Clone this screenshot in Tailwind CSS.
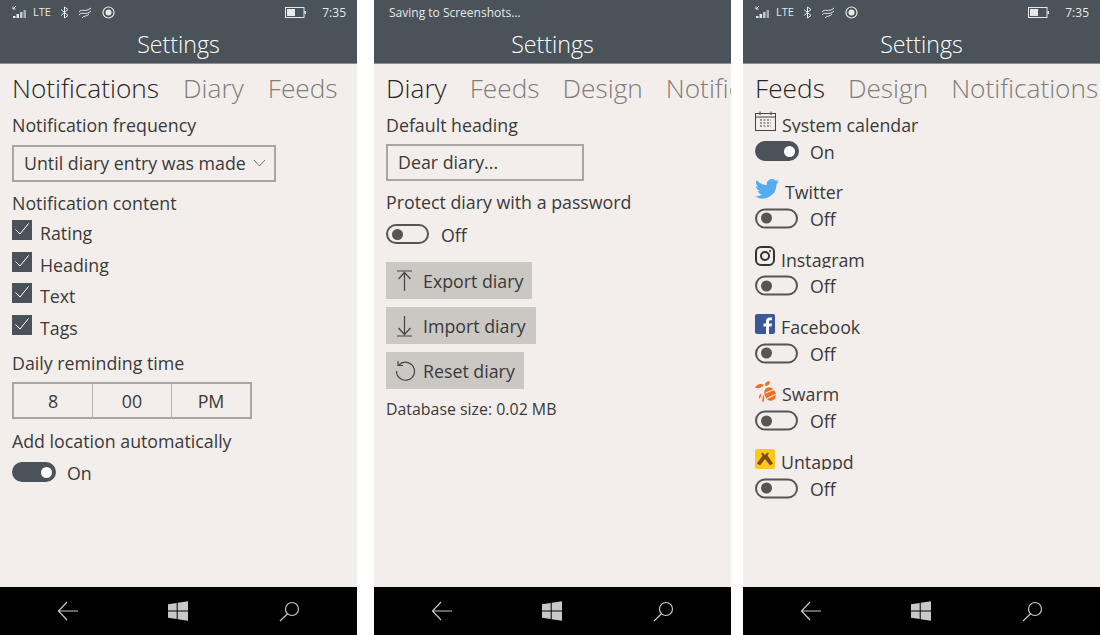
<!DOCTYPE html>
<html lang="en">
<head>
    <meta charset="UTF-8">
    <title>Settings</title>
    <script src="https://cdn.jsdelivr.net/npm/@tailwindcss/browser@4"></script>
</head>
<body class="bg-white font-['Open_Sans',sans-serif] text-[#3a3a3a] overflow-hidden">
<div class="flex w-[1100px] h-[635px]">

    <!-- Notifications -->
    <section class="w-[357px] h-[635px] flex flex-col bg-[#f3eeeb] shrink-0">
        <header class="h-16 bg-[#4a5359] text-white shrink-0 border-b border-[#8a8f92]">
            <div class="h-[25px] flex items-center pl-3 pr-[11px] text-[#e8e8e8]">
                <svg class="w-[16px] h-[16px] mr-[5px]" viewBox="0 0 16 16" fill="#e8e8e8"><path d="M1 4 4 1M1 1.500V4h2.500" stroke="#e8e8e8" fill="none"/><rect x="1" y="11" width="2.500" height="2"/><rect x="4.500" y="9" width="2.500" height="4"/><rect x="8" y="7" width="2.500" height="6" opacity=".8"/><rect x="11.500" y="5" width="2.500" height="8" opacity=".6"/></svg>
                <span class="text-[11px] mr-[9px]">LTE</span>
                <svg class="w-[9px] h-[13px] mr-[9px]" viewBox="0 0 9 13" fill="none" stroke="#e8e8e8"><path d="M1 3.500 8 9.500 4.500 12V1L8 3.500 1 9.500"/></svg>
                <svg class="w-[14px] h-[12px] mr-[10px]" viewBox="0 0 14 12" fill="none" stroke="#e8e8e8"><path d="M1 5C4 1 7 6 13 1M1 8C4 4 8 9 13 4M4 11C6 8 9 10 11 7"/></svg>
                <svg class="w-[13px] h-[13px]" viewBox="0 0 13 13" fill="none"><circle cx="6.500" cy="6.500" r="5.500" stroke="#e8e8e8" stroke-width="1.200"/><circle cx="6.500" cy="6.500" r="3" fill="#e8e8e8"/></svg>
                <svg class="w-[21px] h-[11px] ml-auto mr-[16px]" viewBox="0 0 21 11" fill="none"><rect x=".5" y=".5" width="18.500" height="10" stroke="#e8e8e8"/><rect x="2" y="2" width="8" height="7" fill="#e8e8e8"/><rect x="19.500" y="4" width="1.500" height="3" fill="#e8e8e8"/></svg>
                <span class="text-[12px]">7:35</span>
            </div>
            <h1 class="text-center text-[23.200px] leading-[39px] font-light">Settings</h1>
        </header>
        <div class="flex-1 min-w-0 overflow-hidden">
            <nav class="flex whitespace-nowrap h-[44px] items-center mt-[3px] pl-3 gap-[24px] text-[26.250px] font-light text-[#7f7c79]">
                <span class="text-[#262626]">Notifications</span><span>Diary</span><span>Feeds</span>
            </nav>
            <div class="px-3 text-[17.800px] leading-[26px]">
                <p class="mt-[1px]">Notification frequency</p>
                <div class="mt-[7px] w-[264px] h-[37px] border-2 border-[#a9a5a1] flex items-center justify-between pl-[10px] pr-[8px] pb-[2px]">
                    <span>Until diary entry was made</span>
                    <svg class="w-[13px] h-[8px]" viewBox="0 0 13 8" fill="none" stroke="#77736f"><path d="M1 1l5.500 6L12 1"/></svg>
                </div>
                <p class="mt-[8px]">Notification content</p>
                <div class="mt-[4px] flex flex-col gap-[11.700px]">
                    <label class="flex items-center h-5 gap-2"><span class="size-5 bg-[#4a5359] flex items-center justify-center"><svg class="size-4 -translate-y-px" viewBox="0 0 16 16" fill="none" stroke="#fff"><path d="M1.500 8.500 6 13 14.500 2.500"/></svg></span><span class="translate-y-[3px]">Rating</span></label>
                    <label class="flex items-center h-5 gap-2"><span class="size-5 bg-[#4a5359] flex items-center justify-center"><svg class="size-4 -translate-y-px" viewBox="0 0 16 16" fill="none" stroke="#fff"><path d="M1.500 8.500 6 13 14.500 2.500"/></svg></span><span class="translate-y-[3px]">Heading</span></label>
                    <label class="flex items-center h-5 gap-2"><span class="size-5 bg-[#4a5359] flex items-center justify-center"><svg class="size-4 -translate-y-px" viewBox="0 0 16 16" fill="none" stroke="#fff"><path d="M1.500 8.500 6 13 14.500 2.500"/></svg></span><span class="translate-y-[3px]">Text</span></label>
                    <label class="flex items-center h-5 gap-2"><span class="size-5 bg-[#4a5359] flex items-center justify-center"><svg class="size-4 -translate-y-px" viewBox="0 0 16 16" fill="none" stroke="#fff"><path d="M1.500 8.500 6 13 14.500 2.500"/></svg></span><span class="translate-y-[3px]">Tags</span></label>
                </div>
                <p class="mt-[15px]">Daily reminding time</p>
                <div class="mt-[6px] w-[240px] h-[37px] border-2 border-[#a9a5a1] grid grid-cols-[78px_80px_1fr] text-center leading-[35px]">
                    <span>8</span><span class="border-x border-[#b5b1ad]">00</span><span>PM</span>
                </div>
                <p class="mt-[9px]">Add location automatically</p>
                <div class="mt-[8px] flex items-center gap-[11px] h-5">
                    <span class="w-[44px] h-5 rounded-full bg-[#4a5359] flex items-center justify-end pr-[4px]"><span class="size-[11px] rounded-full bg-white"></span></span><span class="translate-y-px">On</span>
                </div>
            </div>
        </div>
        <footer class="h-12 bg-black shrink-0 flex items-center pl-[57px]">
            <svg class="w-[22px] h-[20px]" viewBox="0 0 22 20" fill="none" stroke="#c8c8c8" stroke-width="1.200"><path d="M21 10H2M10 1 1.500 10l8.500 9"/></svg>
            <svg class="w-[20px] h-[20px] ml-[89px]" viewBox="0 0 20 20" fill="#c8c8c8"><path d="M0 3.200 8.700 2V9.500H0ZM9.700 1.800 20 .3V9.500H9.700ZM0 10.500H8.700V18L0 16.800ZM9.700 10.500H20V19.700L9.700 18.200Z"/></svg>
            <svg class="w-[21px] h-[21px] ml-[91px]" viewBox="0 0 21 21" fill="none" stroke="#c8c8c8" stroke-width="1.200"><circle cx="13" cy="8" r="6.500"/><path d="M8.500 12.800 1 20"/></svg>
        </footer>
    </section>

    <!-- Diary -->
    <section class="w-[357px] h-[635px] flex flex-col bg-[#f3eeeb] shrink-0 ml-[17px]">
        <header class="h-16 bg-[#4a5359] text-white shrink-0 border-b border-[#8a8f92]">
            <div class="h-[25px] flex items-center pl-[15px] text-[12px] text-[#e8e8e8] leading-[22px]">Saving to Screenshots...</div>
            <h1 class="text-center text-[23.200px] leading-[39px] font-light">Settings</h1>
        </header>
        <div class="flex-1 min-w-0 overflow-hidden">
            <nav class="flex whitespace-nowrap h-[44px] items-center mt-[3px] pl-3 gap-[23px] text-[26.250px] font-light text-[#7f7c79]">
                <span class="text-[#262626]">Diary</span><span>Feeds</span><span>Design</span><span>Notifications</span>
            </nav>
            <div class="px-3 text-[17.800px] leading-[26px]">
                <p class="mt-[1px]">Default heading</p>
                <div class="mt-[6px] w-[198px] h-[37px] border-2 border-[#a9a5a1] flex items-center pl-[10px] pb-[1px]">Dear diary...</div>
                <p class="mt-[8px]">Protect diary with a password</p>
                <div class="mt-[9px] flex items-center gap-[12px] h-5">
                    <span class="w-[43px] h-5 rounded-full border-2 border-[#555] flex items-center pl-[4px]"><span class="size-[11px] rounded-full bg-[#555]"></span></span><span class="translate-y-px">Off</span>
                </div>
                <div class="mt-[18px] flex flex-col items-start gap-[8px]">
                    <button class="w-[146px] h-[37px] bg-[#cbc7c3] flex items-center pl-[10px] gap-[10px]"><svg class="w-[17px] h-[24px]" viewBox="0 0 17 24" fill="none" stroke="#444" stroke-width="1.200"><path d="M1 2H16M8.500 22V4M2.500 10l6-6.500 6 6.500"/></svg>Export diary</button>
                    <button class="w-[150px] h-[37px] bg-[#cbc7c3] flex items-center pl-[10px] gap-[10px]"><svg class="w-[17px] h-[24px]" viewBox="0 0 17 24" fill="none" stroke="#444" stroke-width="1.200"><path d="M1 22H16M8.500 2V20M2.500 14l6 6.500 6-6.500"/></svg>Import diary</button>
                    <button class="w-[138px] h-[37px] bg-[#cbc7c3] flex items-center pl-[9px] gap-[7px]"><svg class="w-[21px] h-[21px]" viewBox="0 0 21 21" fill="none" stroke="#444" stroke-width="1.200"><path d="M4 5A9 9 0 1 1 1.500 11M3 1V5.500H8"/></svg>Reset diary</button>
                </div>
                <p class="mt-[7px] text-[15.900px]">Database size: 0.02 MB</p>
            </div>
        </div>
        <footer class="h-12 bg-black shrink-0 flex items-center pl-[57px]">
            <svg class="w-[22px] h-[20px]" viewBox="0 0 22 20" fill="none" stroke="#c8c8c8" stroke-width="1.200"><path d="M21 10H2M10 1 1.500 10l8.500 9"/></svg>
            <svg class="w-[20px] h-[20px] ml-[89px]" viewBox="0 0 20 20" fill="#c8c8c8"><path d="M0 3.200 8.700 2V9.500H0ZM9.700 1.800 20 .3V9.500H9.700ZM0 10.500H8.700V18L0 16.800ZM9.700 10.500H20V19.700L9.700 18.200Z"/></svg>
            <svg class="w-[21px] h-[21px] ml-[91px]" viewBox="0 0 21 21" fill="none" stroke="#c8c8c8" stroke-width="1.200"><circle cx="13" cy="8" r="6.500"/><path d="M8.500 12.800 1 20"/></svg>
        </footer>
    </section>

    <!-- Feeds -->
    <section class="w-[357px] h-[635px] flex flex-col bg-[#f3eeeb] shrink-0 ml-[12px]">
        <header class="h-16 bg-[#4a5359] text-white shrink-0 border-b border-[#8a8f92]">
            <div class="h-[25px] flex items-center pl-3 pr-[11px] text-[#e8e8e8]">
                <svg class="w-[16px] h-[16px] mr-[5px]" viewBox="0 0 16 16" fill="#e8e8e8"><path d="M1 4 4 1M1 1.500V4h2.500" stroke="#e8e8e8" fill="none"/><rect x="1" y="11" width="2.500" height="2"/><rect x="4.500" y="9" width="2.500" height="4"/><rect x="8" y="7" width="2.500" height="6" opacity=".8"/><rect x="11.500" y="5" width="2.500" height="8" opacity=".6"/></svg>
                <span class="text-[11px] mr-[9px]">LTE</span>
                <svg class="w-[9px] h-[13px] mr-[9px]" viewBox="0 0 9 13" fill="none" stroke="#e8e8e8"><path d="M1 3.500 8 9.500 4.500 12V1L8 3.500 1 9.500"/></svg>
                <svg class="w-[14px] h-[12px] mr-[10px]" viewBox="0 0 14 12" fill="none" stroke="#e8e8e8"><path d="M1 5C4 1 7 6 13 1M1 8C4 4 8 9 13 4M4 11C6 8 9 10 11 7"/></svg>
                <svg class="w-[13px] h-[13px]" viewBox="0 0 13 13" fill="none"><circle cx="6.500" cy="6.500" r="5.500" stroke="#e8e8e8" stroke-width="1.200"/><circle cx="6.500" cy="6.500" r="3" fill="#e8e8e8"/></svg>
                <svg class="w-[21px] h-[11px] ml-auto mr-[16px]" viewBox="0 0 21 11" fill="none"><rect x=".5" y=".5" width="18.500" height="10" stroke="#e8e8e8"/><rect x="2" y="2" width="8" height="7" fill="#e8e8e8"/><rect x="19.500" y="4" width="1.500" height="3" fill="#e8e8e8"/></svg>
                <span class="text-[12px]">7:35</span>
            </div>
            <h1 class="text-center text-[23.200px] leading-[39px] font-light">Settings</h1>
        </header>
        <div class="flex-1 min-w-0 overflow-hidden">
            <nav class="flex whitespace-nowrap h-[44px] items-center mt-[3px] pl-3 gap-[23px] text-[26.250px] font-light text-[#7f7c79]">
                <span class="text-[#262626]">Feeds</span><span>Design</span><span>Notifications</span>
            </nav>
            <div class="px-3 text-[17.800px] leading-[26px]">
                <div class="h-[67.500px]">
                    <div class="h-[22px] flex items-end gap-[6px] overflow-hidden">
                        <svg class="w-[21px] h-[20px] self-start shrink-0" viewBox="0 0 21 20" fill="none" stroke="#444"><rect x=".5" y="2.500" width="20" height="17"/><path d="M.5 6H20.500M5 .5V4M16 .5V4"/><path d="M5 9H16M5 12H16M5 15H16" stroke-dasharray="2 1.500"/></svg>
                        <span class="leading-[24px] translate-y-[4px] whitespace-nowrap">System calendar</span>
                    </div>
                    <div class="mt-[8px] flex items-center gap-[11px] h-5">
                        <span class="w-[44px] h-5 rounded-full bg-[#4a5359] flex items-center justify-end pr-[4px]"><span class="size-[11px] rounded-full bg-white"></span></span><span class="translate-y-px">On</span>
                    </div>
                </div>
                <div class="h-[67.500px]">
                    <div class="h-[22px] flex items-end gap-[6px] overflow-hidden">
                        <svg class="w-[24px] h-[20px] self-start shrink-0" viewBox="0 0 24 20" fill="#55acee"><path d="M24 2.400c-.9.400-1.800.700-2.800.800 1-.600 1.800-1.600 2.200-2.700-1 .600-2 1-3.100 1.200A4.900 4.900 0 0 0 11.900 6.200C7.800 6 4.200 4 1.700.900c-1.300 2.200-.7 5.100 1.500 6.600-.8 0-1.600-.200-2.200-.600 0 2.400 1.700 4.400 3.900 4.900-.7.200-1.500.200-2.200.100.600 2 2.400 3.400 4.600 3.400A9.900 9.900 0 0 1 0 17.300 14 14 0 0 0 21.500 5c1-.700 1.800-1.600 2.500-2.600Z"/></svg>
                        <span class="leading-[24px] translate-y-[3px]">Twitter</span>
                    </div>
                    <div class="mt-[8px] flex items-center gap-[11px] h-5 -translate-y-[0.5px]">
                        <span class="w-[43px] h-5 rounded-full border-2 border-[#555] flex items-center pl-[4px]"><span class="size-[11px] rounded-full bg-[#555]"></span></span><span class="ml-px">Off</span>
                    </div>
                </div>
                <div class="h-[67.500px]">
                    <div class="h-[22px] flex items-end gap-[6px] overflow-hidden">
                        <svg class="w-[20px] h-[20px] self-start shrink-0" viewBox="0 0 20 20" fill="none" stroke="#333" stroke-width="2"><rect x="1" y="1" width="18" height="18" rx="5"/><circle cx="10" cy="10" r="4"/><circle cx="15" cy="5" r="1" fill="#333" stroke="none"/></svg>
                        <span class="leading-[24px] translate-y-[4px]">Instagram</span>
                    </div>
                    <div class="mt-[8px] flex items-center gap-[11px] h-5 -translate-y-[0.5px]">
                        <span class="w-[43px] h-5 rounded-full border-2 border-[#555] flex items-center pl-[4px]"><span class="size-[11px] rounded-full bg-[#555]"></span></span><span class="ml-px">Off</span>
                    </div>
                </div>
                <div class="h-[67.500px]">
                    <div class="h-[22px] flex items-end gap-[6px] overflow-hidden">
                        <svg class="w-[20px] h-[20px] self-start shrink-0" viewBox="0 0 20 20"><rect width="20" height="20" rx="2" fill="#3b5998"/><path d="M14 20v-7.500h2.500l.4-3H14V7.700c0-.900.300-1.500 1.500-1.500H17V3.500c-.300 0-1.200-.100-2.200-.100-2.300 0-3.800 1.400-3.800 3.900v2.200H8.500v3H11V20Z" fill="#fff"/></svg>
                        <span class="leading-[24px] translate-y-[3px]">Facebook</span>
                    </div>
                    <div class="mt-[8px] flex items-center gap-[11px] h-5 -translate-y-[0.5px]">
                        <span class="w-[43px] h-5 rounded-full border-2 border-[#555] flex items-center pl-[4px]"><span class="size-[11px] rounded-full bg-[#555]"></span></span><span class="ml-px">Off</span>
                    </div>
                </div>
                <div class="h-[67.500px]">
                    <div class="h-[22px] flex items-end gap-[6px] overflow-hidden">
                        <svg class="w-[21px] h-[22px] self-start shrink-0" viewBox="0 0 21 22" fill="#ec6f26"><path d="M0 6.500C2 3 6 2 9 4 7 7 3 8 0 6.500ZM10 3C11 1 13 0 15 .5 15 3 13 5 10.500 5ZM7.500 21c-.500-2-.200-5 1-7 1 2 1 5 0 7ZM4 18c-.500-2 .500-4 2-5.500.500 2-.200 4-2 5.500Z"/><ellipse cx="15" cy="13" rx="5.500" ry="7" transform="rotate(-25 15 13)"/><path d="M10.500 12 19 8.500M12 17.500 20.500 13.500" stroke="#f3eeeb" stroke-width="1.200"/></svg>
                        <span class="leading-[24px] translate-y-[3px]">Swarm</span>
                    </div>
                    <div class="mt-[8px] flex items-center gap-[11px] h-5 -translate-y-[0.5px]">
                        <span class="w-[43px] h-5 rounded-full border-2 border-[#555] flex items-center pl-[4px]"><span class="size-[11px] rounded-full bg-[#555]"></span></span><span class="ml-px">Off</span>
                    </div>
                </div>
                <div class="h-[67.500px]">
                    <div class="h-[21px] flex items-end gap-[6px] overflow-hidden">
                        <svg class="w-[20px] h-[20px] self-start shrink-0" viewBox="0 0 20 20"><rect width="20" height="20" rx="2" fill="#fcc81e"/><path d="M2 14.500 7.500 6.500 6 4.500 7.500 3.500 10 6 12.500 3.500 14 4.500 12.500 6.500 18 14.500 15 16.500 10 10 5 16.500Z" fill="#7a4d12"/></svg>
                        <span class="leading-[24px] translate-y-[4px]">Untappd</span>
                    </div>
                    <div class="mt-[9px] flex items-center gap-[11px] h-5 -translate-y-[0.5px]">
                        <span class="w-[43px] h-5 rounded-full border-2 border-[#555] flex items-center pl-[4px]"><span class="size-[11px] rounded-full bg-[#555]"></span></span><span class="ml-px">Off</span>
                    </div>
                </div>
            </div>
        </div>
        <footer class="h-12 bg-black shrink-0 flex items-center pl-[57px]">
            <svg class="w-[22px] h-[20px]" viewBox="0 0 22 20" fill="none" stroke="#c8c8c8" stroke-width="1.200"><path d="M21 10H2M10 1 1.500 10l8.500 9"/></svg>
            <svg class="w-[20px] h-[20px] ml-[89px]" viewBox="0 0 20 20" fill="#c8c8c8"><path d="M0 3.200 8.700 2V9.500H0ZM9.700 1.800 20 .3V9.500H9.700ZM0 10.500H8.700V18L0 16.800ZM9.700 10.500H20V19.700L9.700 18.200Z"/></svg>
            <svg class="w-[21px] h-[21px] ml-[91px]" viewBox="0 0 21 21" fill="none" stroke="#c8c8c8" stroke-width="1.200"><circle cx="13" cy="8" r="6.500"/><path d="M8.500 12.800 1 20"/></svg>
        </footer>
    </section>
</div>
</body>
</html>
